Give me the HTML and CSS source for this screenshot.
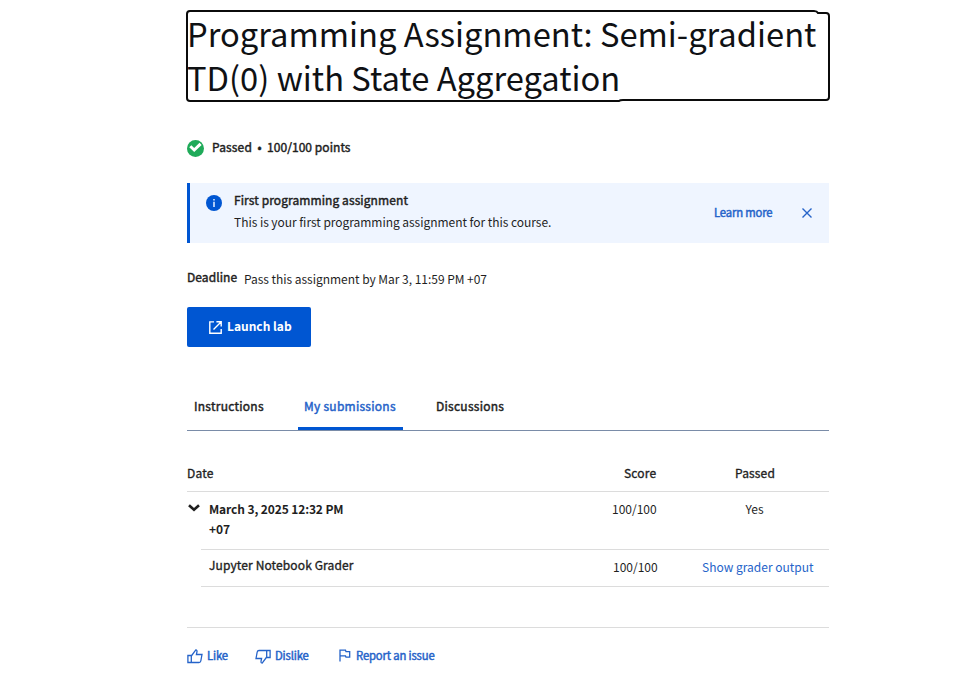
FILE: index.html
```html
<!DOCTYPE html>
<html lang="en">
<head>
<meta charset="utf-8">
<title>Programming Assignment</title>
<link rel="stylesheet" href="styles.css">
</head>
<body>
<main class="page">
  <header class="title-wrap">
    <h1 class="title">Programming Assignment: Semi-gradient<br><span>TD(0) with State Aggregation</span></h1>
    <svg class="focus-ring" width="646" height="94" viewBox="0 0 646 94" fill="none" stroke="#0b0b0b" stroke-width="2"><path d="M5 2H629Q632 2 633 4H641Q644 4 644 7V88Q644 91 641 91H438Q435 91 434 92H5Q2 92 2 89V5Q2 2 5 2Z"/></svg>
  </header>

  <div class="status semi">
    <svg width="17" height="17" viewBox="0 0 17 17"><circle cx="8.5" cy="8.5" r="8.5" fill="#1faa59"/><path d="M3.3 6.2 7.2 10 13.6 3.8" fill="none" stroke="#fff" stroke-width="3"/></svg>
    <span class="t-passed">Passed</span><span class="dot">•</span><span class="t-points">100/100 points</span>
  </div>

  <section class="banner">
    <svg class="info" width="16" height="16" viewBox="0 0 16 16"><circle cx="8" cy="8" r="8" fill="#0056d2"/><path d="M7.2 4h1.6v1.5H7.2zM7.2 6.8h1.6V12H7.2z" fill="#d9e8ff"/></svg>
    <div class="banner-text">
      <div class="semi t-first">First programming assignment</div>
      <div class="t-this">This is your first programming assignment for this course.</div>
    </div>
    <a class="link semi t-learn">Learn more</a>
    <svg class="close" width="10" height="10" viewBox="0 0 10 10" fill="none" stroke="#2563c9" stroke-width="1.4"><path d="M.5.5l9 9M9.5.5l-9 9"/></svg>
  </section>

  <div class="deadline"><span class="semi t-dead">Deadline</span><span class="t-pass">Pass this assignment by Mar 3, 11:59 PM +07</span></div>

  <button class="launch"><svg width="13" height="13" viewBox="0 0 13 13" fill="none" stroke="#fff" stroke-width="1.4"><path d="M5 .9H.8v11.3h11.4V8M7.4.8h4.8v4.8M12 1 4.5 8.5"/></svg><span class="t-launch">Launch lab</span></button>

  <nav class="tabs semi">
    <a class="tab tab-a">Instructions</a>
    <a class="tab tab-b active">My submissions</a>
    <a class="tab tab-c">Discussions</a>
  </nav>

  <section class="table">
    <div class="row head medium"><span>Date</span><span>Score</span><span>Passed</span></div>
    <div class="row entry">
      <svg class="chevron" width="12" height="8" viewBox="0 0 12 8" fill="none" stroke="#1f1f1f" stroke-width="2.6"><path d="M1 1.2 6 5.8l5-4.6"/></svg>
      <strong class="t-march">March 3, 2025 12:32 PM<br>+07</strong><span>100/100</span><span>Yes</span>
    </div>
    <div class="row detail"><span class="medium t-jup">Jupyter Notebook Grader</span><span class="score">100/100</span><a class="passed link">Show grader output</a></div>
  </section>

  <footer class="feedback semi">
    <a class="action like"><svg width="16" height="15" viewBox="0 0 16 15" fill="none" stroke="#2563c9" stroke-width="1.3"><path d="M.9 6.5h3.4v7H.9zM4.3 7 8.8.9q1.5.3 1.2 1.8L9.4 5.5h5.6L13.8 12q-.3 1.5-1.8 1.5H4.3"/></svg><span>Like</span></a>
    <a class="action dislike"><svg width="16" height="15" viewBox="0 0 16 15" fill="none" stroke="#2563c9" stroke-width="1.3"><path d="M15.1 8.5h-3.4v-7h3.4zM11.7 8 7.2 14.1q-1.5-.3-1.2-1.8l.6-2.8H1L2.2 3Q2.5 1.5 4 1.5h7.7"/></svg><span>Dislike</span></a>
    <a class="action report"><svg width="12" height="13" viewBox="0 0 12 13" fill="none" stroke="#2563c9" stroke-width="1.3"><path d="M1 12.5V1.2h5.5L7 2.7h3.7V8.2H7L6.5 6.9H1"/></svg><span>Report an issue</span></a>
  </footer>
</main>
</body>
</html>
```
FILE: styles.css
```css
* { box-sizing: border-box; }
body { margin: 0; background: #fff; color: #1f1f1f; font: 12px/20px "Noto Sans CJK JP", "Noto Sans", sans-serif; }
span, strong, a { white-space: nowrap; }
.page { width: 642px; margin-left: 187px; padding-top: 11px; }
.semi { font-weight: 400; -webkit-text-stroke: .45px currentColor; }
.medium { -webkit-text-stroke: .35px currentColor; }
.link { color: #2563c9; }
.title-wrap { position: relative; height: 88px; }
.title { margin: 0; font-size: 32.7px; line-height: 44px; font-weight: 400; color: #0f1114; white-space: nowrap; }
.focus-ring { position: absolute; left: -2px; top: -2px; }
.status { display: flex; align-items: center; height: 20px; margin-top: 38px; }
.status svg { margin: 2px 8px 0 0; }
.t-passed { letter-spacing: .15px; }
.t-points { letter-spacing: .06px; }
.dot { width: 15px; text-align: center; }
.banner { display: flex; height: 60px; margin-top: 26px; background: #eff5ff; border-left: 3px solid #0056d2; }
.info { margin: 12px 12px 0 16px; }
.banner-text { width: 480px; padding-top: 6px; line-height: 22px; }
.t-first { letter-spacing: .09px; }
.t-this { letter-spacing: -.04px; }
.t-learn { width: 88px; margin-top: 19px; font-size: 11.3px; letter-spacing: -.17px; }
.close { margin-top: 25px; }
.deadline { display: flex; height: 20px; margin-top: 24px; }
.t-dead { width: 57px; letter-spacing: .08px; }
.t-pass { margin-top: 2px; letter-spacing: -.03px; }
.launch { display: flex; align-items: center; width: 124px; height: 40px; margin-top: 20px; padding: 0 0 0 22px; border: 0; border-radius: 2px; background: #0056d2; color: #fff; font: bold 12px/20px "Noto Sans CJK JP", sans-serif; }
.launch span { margin: 0 0 2px 5px; }
.tabs { display: flex; height: 47px; margin-top: 37px; border-bottom: 1px solid #7a8ca8; letter-spacing: .26px; }
.tab { padding: 12px 7px 0; height: 46px; }
.tab-a { width: 84px; }
.tab-b { width: 105px; margin-left: 27px; padding-left: 6px; }
.tab-c { margin-left: 26px; }
.active { color: #2563c9; border-bottom: 3px solid #0056d2; border-radius: 2px 2px 0 0; }
.table { margin-top: 32px; }
.row { display: grid; border-bottom: 1px solid #dcdcdc; }
.head { height: 29px; grid-template-columns: 437px 111px 94px; letter-spacing: .15px; }
.entry { height: 58px; grid-template-columns: 22px 403px 133.5px 83.5px; padding-top: 7px; border-bottom: 0; }
.t-march { letter-spacing: -.12px; }
.chevron { margin: 5px 0 0 1px; }
.detail { height: 38px; grid-template-columns: 404px 89px 127px; margin: -1px 0 0 14px; padding: 5px 0 0 8px; border-top: 1px solid #dcdcdc; }
.t-jup { letter-spacing: .12px; }
.detail .score, .detail .passed { margin-top: 2px; }
.feedback { display: flex; height: 48px; margin-top: 40px; padding-top: 17px; border-top: 1px solid #dcdcdc; color: #2563c9; font-size: 11.3px; letter-spacing: -.16px; }
.action { display: flex; height: 20px; }
.action svg { margin-top: 4px; }
.action span { margin-left: 4px; }
.like { width: 68px; }
.dislike { width: 84px; }
.report span { margin-left: 5px; }
```
